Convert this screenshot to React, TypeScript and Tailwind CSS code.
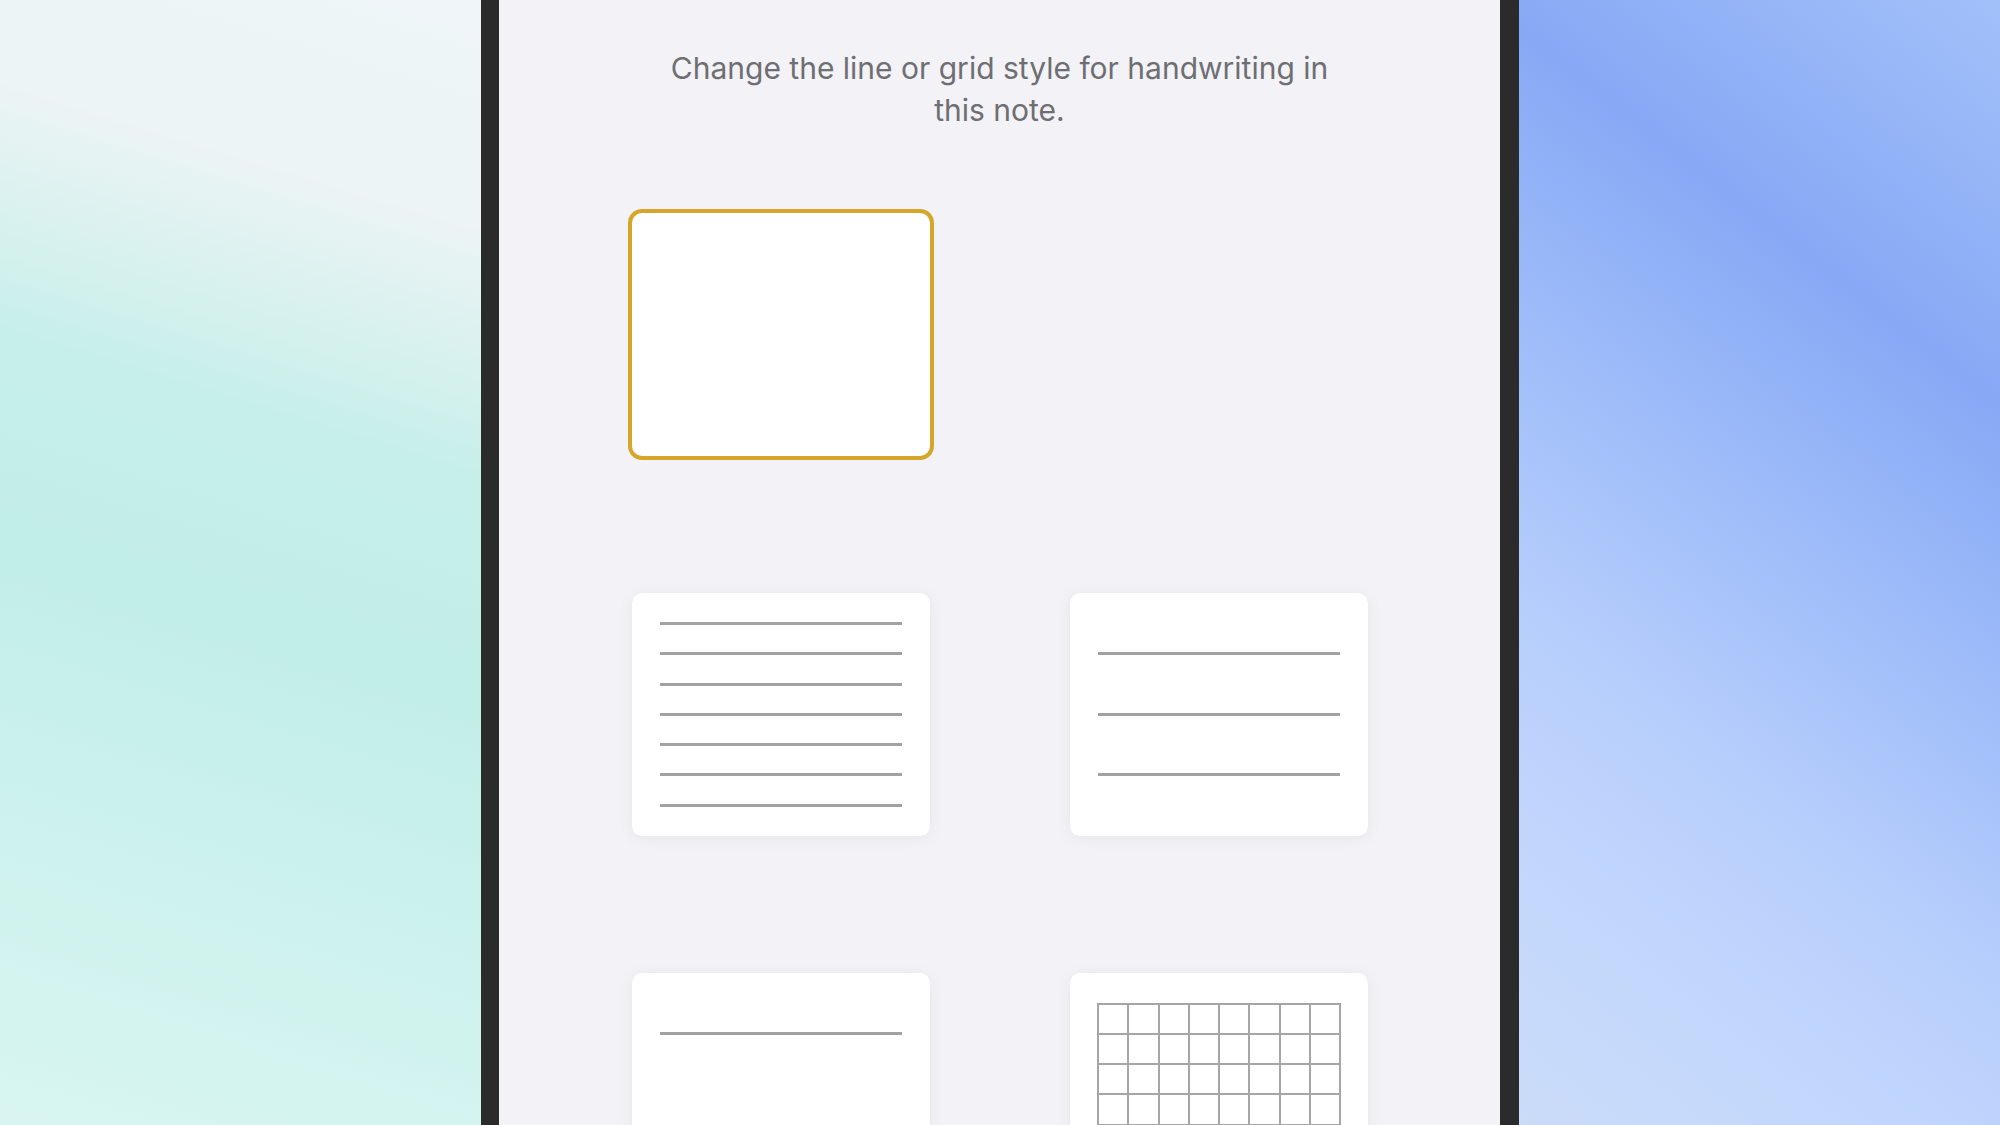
import React from 'react';

type PaperKind = 'blank' | 'narrow' | 'wide' | 'single' | 'grid';

const papers: { kind: PaperKind; selected?: boolean }[] = [
  { kind: 'blank', selected: true },
  { kind: 'narrow' },
  { kind: 'wide' },
  { kind: 'single' },
  { kind: 'grid' },
];

function Rule() {
  return <div className="h-[3px] w-full shrink-0 bg-[#a2a2a2]" />;
}

function PaperCard({ kind, selected }: { kind: PaperKind; selected?: boolean }) {
  return (
    <div
      className={`h-[243px] w-[298px] overflow-hidden rounded-[10px] bg-white ${
        selected ? 'ring-4 ring-[#d6a62b]' : 'shadow-[0_2px_16px_rgba(0,0,0,0.06)]'
      }`}
    >
      {kind === 'narrow' && (
        <div className="flex flex-col gap-[27.3px] px-[28px] pt-[29px]">
          {Array.from({ length: 7 }).map((_, i) => (
            <Rule key={i} />
          ))}
        </div>
      )}
      {kind === 'wide' && (
        <div className="flex flex-col gap-[57.6px] px-[28px] pt-[59px]">
          {Array.from({ length: 3 }).map((_, i) => (
            <Rule key={i} />
          ))}
        </div>
      )}
      {kind === 'single' && (
        <div className="px-[28px] pt-[59px]">
          <Rule />
        </div>
      )}
      {kind === 'grid' && (
        <div className="ml-[27px] mt-[30px] grid h-[183px] w-[244px] grid-cols-8 grid-rows-6 border-l-[2.5px] border-t-[2.5px] border-[#a6a6a6]">
          {Array.from({ length: 48 }).map((_, i) => (
            <div key={i} className="border-b-[2.5px] border-r-[2.5px] border-[#a6a6a6]" />
          ))}
        </div>
      )}
    </div>
  );
}

export default function App() {
  return (
    <div className="flex h-[1125px] w-full overflow-hidden font-['Inter','Noto_Sans',sans-serif]">
      {/* left wallpaper */}
      <div className="flex-1 bg-[linear-gradient(197deg,#eff5f8_0%,#ecf4f5_18%,#c6efe9_38%,#c2eee8_55%,#cdf2ed_75%,#d8f5f1_100%)]" />

      <div className="w-[18px] shrink-0 bg-[#2b2b2b]" />

      {/* screen */}
      <div className="w-[1001px] shrink-0 bg-[#f2f2f7] pt-[47px]">
        <p className="mx-auto w-[720px] text-center text-[30px] leading-[42px] text-[#6e6e73]">
          Change the line or grid style for handwriting in
          <br />
          this note.
        </p>

        <div className="mt-[82px] grid grid-cols-[298px_298px] gap-x-[140px] gap-y-[137px] pl-[133px]">
          <PaperCard kind="blank" selected />
          <div />
          {papers.slice(1).map((p) => (
            <PaperCard key={p.kind} kind={p.kind} />
          ))}
        </div>
      </div>

      <div className="w-[19px] shrink-0 bg-[#2b2b2b]" />

      {/* right wallpaper */}
      <div className="flex-1 bg-[linear-gradient(218deg,#a2c0f9_0%,#87a9f5_27%,#9dbbf9_45%,#b6cefc_65%,#c3d7fd_82%,#cadcf8_100%)]" />
    </div>
  );
}
